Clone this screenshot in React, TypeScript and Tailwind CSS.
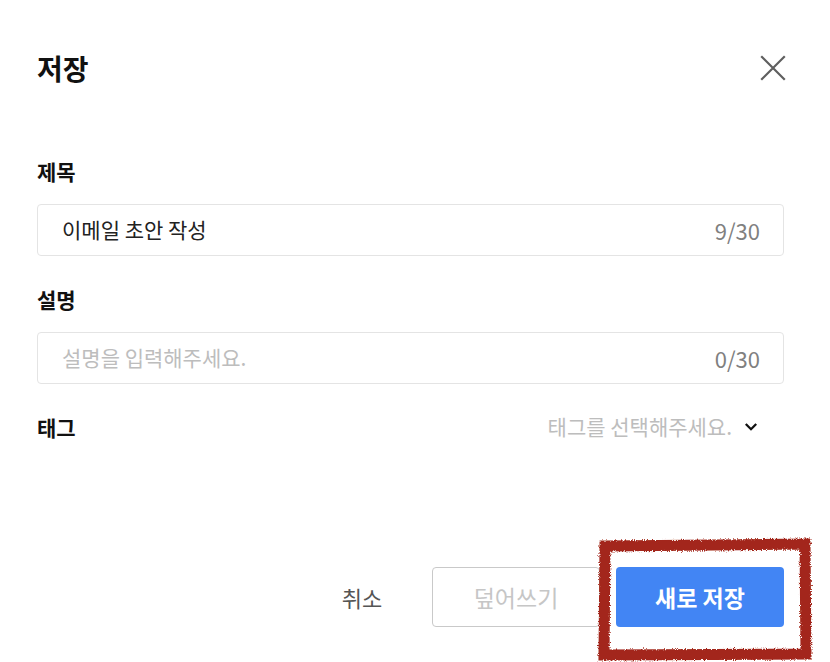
import React from "react";

function CloseIcon() {
  return (
    <svg width="26" height="26" viewBox="0 0 26 26" fill="none">
      <path d="M2 2 L24 24 M24 2 L2 24" stroke="#5f5f5f" strokeWidth="2.2" strokeLinecap="square" />
    </svg>
  );
}

function Chevron() {
  return (
    <svg width="14" height="10" viewBox="0 0 14 10" fill="none">
      <polyline points="1.8,2 7,7.2 12.2,2" stroke="#111" strokeWidth="2.3" fill="none" />
    </svg>
  );
}

function Field({ label, value, placeholder, count }: { label: string; value?: string; placeholder?: string; count: string }) {
  return (
    <div className="flex flex-col">
      <div className="h-[28px] leading-[28px] text-[21px] font-bold text-[#111]">{label}</div>
      <div className="mt-[19px] h-[52px] rounded-[4px] border border-[#e4e4e4] flex items-center justify-between pl-[24px] pr-[23px]">
        {value ? (
          <span className="text-[21px] text-[#222]">{value}</span>
        ) : (
          <span className="text-[21px] text-[#bdbdbd]">{placeholder}</span>
        )}
        <span className="text-[22px] text-[#808080]">{count}</span>
      </div>
    </div>
  );
}

export default function App() {
  return (
    <div className="relative w-full h-[662px] bg-white overflow-hidden font-['Noto_Sans_CJK_KR',sans-serif]">
      <div className="flex flex-col pl-[37px] pr-[46px]">
        <div className="mt-[50px] h-[36px] flex items-center justify-between">
          <span className="text-[28px] font-bold text-[#111] leading-[36px]">저장</span>
          <span className="mr-[-2px]"><CloseIcon /></span>
        </div>
        <div className="mt-[71px]">
          <Field label="제목" value="이메일 초안 작성" count="9/30" />
        </div>
        <div className="mt-[29px]">
          <Field label="설명" placeholder="설명을 입력해주세요." count="0/30" />
        </div>
        <div className="mt-[29px] h-[28px] flex items-center justify-between">
          <span className="text-[21px] font-bold text-[#111] leading-[28px]">태그</span>
          <span className="flex items-center gap-[12px] pr-[26px]">
            <span className="text-[21px] text-[#bdbdbd]">태그를 선택해주세요.</span>
            <Chevron />
          </span>
        </div>
        <div className="mt-[126px] flex items-center justify-end">
          <button className="w-[100px] h-[60px] text-[22px] text-[#555] bg-transparent">취소</button>
          <button className="ml-[20px] w-[168px] h-[60px] rounded-[4px] border-[1.5px] border-[#c9c9c9] text-[23px] text-[#c6c6c6] bg-white">덮어쓰기</button>
          <button className="ml-[16px] w-[168px] h-[60px] rounded-[4px] bg-[#4285f4] text-[23px] font-semibold text-white">새로 저장</button>
        </div>
      </div>
      <svg className="absolute left-0 top-0 pointer-events-none" width="830" height="662" viewBox="0 0 830 662">
        <defs>
          <filter id="rough" x="-10%" y="-10%" width="120%" height="120%">
            <feTurbulence type="fractalNoise" baseFrequency="0.9" numOctaves="2" seed="3" result="n" />
            <feDisplacementMap in="SourceGraphic" in2="n" scale="5" xChannelSelector="R" yChannelSelector="G" />
          </filter>
        </defs>
        <g filter="url(#rough)">
          <path d="M605 546 L805 544 L806 654 L604 655 Z" fill="none" stroke="#a3281b" strokeWidth="11" strokeLinejoin="miter" />
        </g>
      </svg>
    </div>
  );
}
